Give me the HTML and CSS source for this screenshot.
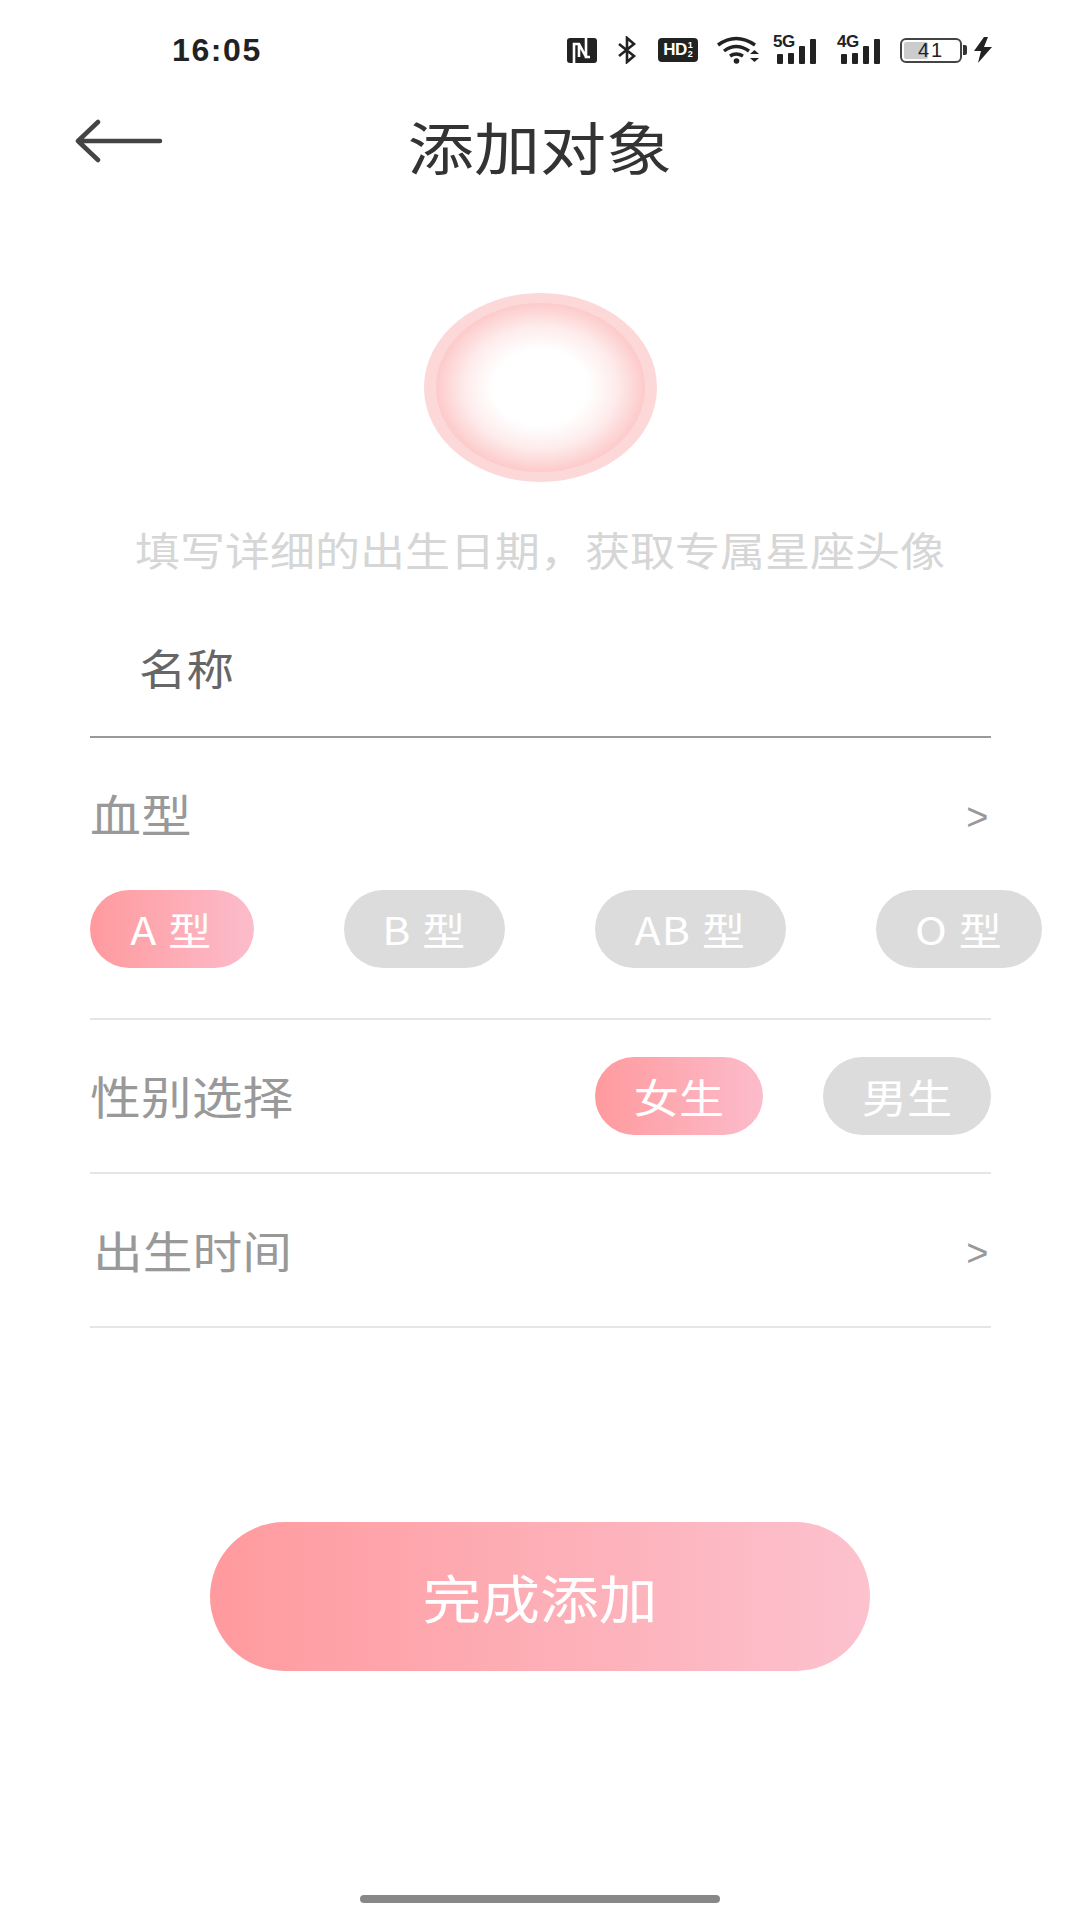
FILE: index.html
```html
<!DOCTYPE html>
<html lang="zh-CN">
<head>
<meta charset="utf-8">
<title>添加对象</title>
<link rel="stylesheet" href="styles.css">
</head>
<body>
<div class="page">
  <div class="status">
    <span class="time">16:05</span>
    <div class="status-icons">
      <svg class="ic" width="30" height="25" viewBox="0 0 30 25"><rect width="30" height="25" rx="3" fill="#222"/><path d="M7 25V6h5l7 13V0M12 6v13M19 6v13h4" fill="none" stroke="#fff" stroke-width="2.600"/></svg>
      <svg class="ic ic-bt" width="21" height="28" viewBox="0 0 21 28"><path d="M3 8l15 12-7 6V2l7 6L3 20" fill="none" stroke="#222" stroke-width="2.600"/></svg>
      <span class="hd"><span class="hd-main">HD</span><span class="hd-frac">1<br>2</span></span>
      <svg class="ic ic-wifi" width="43" height="28" viewBox="0 0 43 28"><path d="M1 9Q19-4 38 9M7 15q12-9 25 0M13 20q6-4 13 0" fill="none" stroke="#222" stroke-width="3.400"/><circle cx="19.500" cy="25" r="2.800" fill="#222"/><path d="M33 18l4.500-4 4.500 4zM33 22l4.500 4 4.500-4z" fill="#222"/></svg>
      <span class="signal"><span class="net">5G</span><span class="bar b1"></span><span class="bar b2"></span><span class="bar b3"></span><span class="bar b4"></span></span>
      <span class="signal sig4"><span class="net">4G</span><span class="bar b1"></span><span class="bar b2"></span><span class="bar b3"></span><span class="bar b4"></span></span>
      <span class="battery"><span class="level"></span><span class="batt-num">41</span></span><span class="batt-tip"></span>
      <svg class="ic ic-bolt" width="20" height="26" viewBox="0 0 20 26"><path d="M11 0L1 14h7L5 26l14-16h-8l4-10z" fill="#222"/></svg>
    </div>
  </div>

  <div class="nav">
    <svg class="back" width="88" height="44" viewBox="0 0 88 44"><path d="M23 3L3 22l20 19M3 22h82" fill="none" stroke="#444" stroke-width="4.500" stroke-linecap="round" stroke-linejoin="round"/></svg>
    <h1 class="title"><span class="wide title-text">添加对象</span></h1>
  </div>

  <div class="avatar"><div class="avatar-inner"></div></div>
  <p class="hint"><span class="wide hint-text">填写详细的出生日期，获取专属星座头像</span></p>

  <div class="form">
    <div class="name-row"><span class="wide left">名称</span></div>
    <div class="row row-blood"><span class="label wide left">血型</span><span class="more">&gt;</span></div>
    <div class="chips">
      <span class="chip on w-a"><span class="wide">A 型</span></span>
      <span class="chip w-b"><span class="wide">B 型</span></span>
      <span class="chip w-ab"><span class="wide">AB 型</span></span>
      <span class="chip w-o"><span class="wide">O 型</span></span>
    </div>
    <div class="row row-sex">
      <span class="label wide left">性别选择</span>
      <div class="sex-chips">
        <span class="chip on w-s"><span class="wide">女生</span></span>
        <span class="chip w-s"><span class="wide">男生</span></span>
      </div>
    </div>
    <div class="row row-time"><span class="label l-time wide left">出生时间</span><span class="more">&gt;</span></div>
  </div>

  <button class="submit"><span class="wide">完成添加</span></button>
  <div class="home"></div>
</div>
</body>
</html>
```

FILE: styles.css
```css
* { box-sizing: border-box; }
html, body { margin: 0; padding: 0; background: #fff; }
body { font-family: "Noto Sans CJK SC", "Noto Sans", sans-serif; }
.page { width: 1080px; height: 1920px; position: relative; overflow: hidden; display: flex; flex-direction: column; align-items: center; }
.wide { display: inline-block; transform: scaleX(1.13); white-space: nowrap; }
.wide.left { transform-origin: left center; }
.title-text { transform: scaleX(1.16); }
.hint-text { transform: scaleX(1.125); }

.status { width: 100%; height: 100px; padding: 28px 87px 0 172px; display: flex; justify-content: space-between; align-items: flex-start; }
.time { font-family: "Liberation Sans", sans-serif; font-size: 32px; font-weight: 700; letter-spacing: 1.600px; color: #222; line-height: 44px; }
.status-icons { display: flex; align-items: center; height: 44px; }
.ic { display: block; }
.ic-bt { margin-left: 19px; }
.hd { margin-left: 21px; width: 40px; height: 24px; background: #222; border-radius: 4px; color: #fff; display: flex; align-items: center; justify-content: center; font-family: "Liberation Sans", sans-serif; font-weight: 700; }
.hd-main { font-size: 17px; letter-spacing: -0.500px; }
.hd-frac { font-size: 9px; line-height: 9px; margin-left: 1px; }
.ic-wifi { margin-left: 19px; }
.signal { margin-left: 13px; position: relative; width: 47px; height: 28px; display: flex; align-items: flex-end; gap: 5px; padding-left: 4px; }
.sig4 { margin-left: 17px; width: 46px; }
.net { position: absolute; left: 0; top: -2px; font-family: "Liberation Sans", sans-serif; font-size: 17px; line-height: 15px; font-weight: 700; color: #222; letter-spacing: -0.500px; }
.bar { width: 6px; background: #222; border-radius: 1px; }
.b1 { height: 10px; }
.b2 { height: 11px; }
.b3 { height: 18px; }
.b4 { height: 25px; }
.battery { margin-left: 17px; width: 62px; height: 25px; border: 2px solid #444; border-radius: 6px; position: relative; display: flex; align-items: center; justify-content: center; overflow: hidden; }
.level { position: absolute; left: 2px; top: 2px; bottom: 2px; width: 24px; background: #ccc; border-radius: 2px; }
.batt-num { position: relative; font-family: "Liberation Sans", sans-serif; font-size: 20px; color: #222; letter-spacing: 2px; line-height: 20px; }
.batt-tip { width: 4px; height: 10px; background: #333; margin-left: 1px; border-radius: 0 2px 2px 0; }
.ic-bolt { margin-left: 6px; }

.nav { width: 100%; height: 100px; position: relative; display: flex; justify-content: center; align-items: flex-start; }
.back { position: absolute; left: 75px; top: 19px; }
.title { margin: 13px 0 0; font-size: 57px; font-weight: 400; line-height: 64px; color: #333; white-space: nowrap; }

.avatar { margin-top: 93px; width: 233px; height: 189px; border-radius: 50%; background: #fcd8d8; padding: 10px 12px; flex: none; }
.avatar-inner { width: 100%; height: 100%; border-radius: 50%; background: radial-gradient(closest-side, #fff 0%, #fff 45%, #feecec 72%, #fdcaca 100%); }

.hint { margin: 45px 0 0; font-size: 40px; line-height: 44px; color: #d6d6d6; white-space: nowrap; }

.form { width: 901px; margin-top: 0; }
.name-row { height: 167px; padding: 71px 0 0 49px; font-size: 42px; line-height: 50px; color: #666; border-bottom: 2px solid #999; }
.row { display: flex; justify-content: space-between; align-items: center; color: #999; }
.row-blood { height: 121px; padding-right: 2px; padding-top: 31px; }
.label { font-size: 45px; color: #999; line-height: 50px; }
.l-time { font-size: 44px; margin-left: 3px; }
.more { font-family: "Liberation Sans", sans-serif; font-size: 38px; color: #999; line-height: 40px; padding-top: 5px; }
.chips { display: flex; gap: 90px; padding: 31px 0 50px; border-bottom: 2px solid #e5e5e5; white-space: nowrap; }
.chip { height: 78px; border-radius: 39px; background: #dcdcdc; color: #fff; font-size: 38px; letter-spacing: 1px; line-height: 78px; text-align: center; flex: none; }
.chip.on { background: linear-gradient(90deg, #ff9a9e, #fcbccb); }
.w-a { width: 164px; }
.w-b { width: 161px; }
.w-ab { width: 191px; }
.w-o { width: 166px; }
.row-sex { height: 154px; border-bottom: 2px solid #e5e5e5; }
.sex-chips { display: flex; gap: 60px; }
.w-s { width: 168px; font-size: 40px; letter-spacing: 0; }
.row-time { height: 154px; border-bottom: 2px solid #e5e5e5; padding-right: 2px; }

.submit { margin-top: 194px; width: 660px; height: 149px; border: 0; border-radius: 75px; background: linear-gradient(90deg, #ff9a9e, #fcc2ce); color: #fff; font-family: inherit; font-size: 52px; padding: 0; flex: none; }
.home { position: absolute; left: 360px; top: 1895px; width: 360px; height: 8px; border-radius: 4px; background: #888; }
```
